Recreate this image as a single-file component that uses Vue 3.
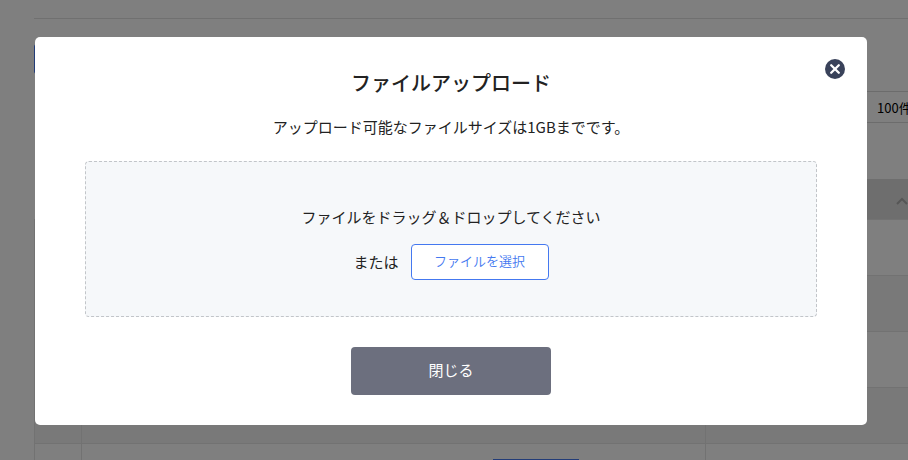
<template>
  <div class="page">
    <main class="content" aria-hidden="true">
      <div class="toolbar">
        <button class="primary-button" type="button" tabindex="-1"></button>
      </div>
      <div class="paging">
        <select v-model="perPage" class="per-page" aria-label="件" tabindex="-1">
          <option value="100">100件</option>
        </select>
      </div>
      <table class="list">
        <thead>
          <tr>
            <th class="col-check"></th>
            <th class="col-name"></th>
            <th class="col-date">
              <svg class="sort-icon" viewBox="0 0 12 8" width="12" height="8">
                <path d="M1 7l5-5 5 5" fill="none" stroke="#acacac" stroke-width="2" />
              </svg>
            </th>
          </tr>
        </thead>
        <tbody>
          <tr v-for="row in rows" :key="row.id">
            <td></td>
            <td class="action">
              <button v-if="row.editable" class="row-button" type="button" tabindex="-1"></button>
            </td>
            <td></td>
          </tr>
        </tbody>
      </table>
    </main>

    <div v-if="isOpen" class="overlay">
      <section class="modal" role="dialog" aria-modal="true" aria-labelledby="upload-title">
        <button class="close-icon" type="button" @click="close">
          <svg viewBox="0 0 20 20" width="20" height="20">
            <circle cx="10" cy="10" r="10" fill="#39425a" />
            <path
              d="M6.2 6.2l7.6 7.6M13.8 6.2l-7.6 7.6"
              fill="none"
              stroke="#fff"
              stroke-width="2.3"
              stroke-linecap="round"
            />
          </svg>
        </button>
        <h1 id="upload-title" class="title">ファイルアップロード</h1>
        <p class="description">アップロード可能なファイルサイズは1GBまでです。</p>
        <div class="drop-area" @dragover.prevent @drop.prevent="onDrop">
          <p class="drop-text">ファイルをドラッグ＆ドロップしてください</p>
          <div class="select-row">
            <span>または</span>
            <button class="select-button" type="button" @click="fileInput.click()">
              ファイルを選択
            </button>
            <input ref="fileInput" type="file" hidden @change="onSelect" />
          </div>
        </div>
        <button class="close-button" type="button" @click="close">閉じる</button>
      </section>
    </div>
  </div>
</template>

<script setup>
import { ref } from 'vue'

const isOpen = ref(true)
const perPage = ref('100')
const rows = [
  { id: 1, editable: false },
  { id: 2, editable: false },
  { id: 3, editable: false },
  { id: 4, editable: false },
  { id: 5, editable: true },
]
const fileInput = ref(null)
const files = ref([])

const close = () => {
  isOpen.value = false
}

const onDrop = (event) => {
  files.value = [...event.dataTransfer.files]
}

const onSelect = (event) => {
  files.value = [...event.target.files]
}
</script>

<style>
body {
  margin: 0;
}
</style>

<style scoped>
.page {
  height: 100vh;
  overflow: hidden;
  background: #fff;
  color: #222;
  font-family: 'Noto Sans CJK JP', sans-serif;
  font-size: 15px;
  line-height: 24px;
}

* {
  box-sizing: border-box;
}

button,
select {
  font-family: inherit;
}

button {
  cursor: pointer;
}

/* list behind the dialog */
.content {
  margin: 18px -40px 0 34px;
}

.toolbar {
  display: flex;
  padding-top: 25px;
  border-top: 1px solid #e0e0e0;
}

.primary-button {
  width: 120px;
  height: 30px;
  border: 0;
  border-radius: 3px;
  background: #4478f0;
}

.paging {
  display: flex;
  justify-content: flex-end;
  margin: 17px 0 56px;
}

.per-page {
  width: 90px;
  height: 32px;
  padding: 0 10px 0 18px;
  border: 1px solid #d8d8d8;
  background: #fff;
  color: #000;
  font-size: 13px;
  appearance: none;
}

.list {
  width: 100%;
  table-layout: fixed;
  border-collapse: collapse;
}

.list th {
  height: 40px;
  padding: 0;
  background: #dcdcdc;
}

.list td {
  height: 56px;
  padding: 0;
  border: 1px solid #e4e4e4;
}

.list tbody tr:nth-child(even) {
  background: #f3f3f3;
}

.col-check {
  width: 47px;
}

.col-date {
  width: 242px;
  text-align: right;
}

.sort-icon {
  margin-right: 40px;
}

.row-button {
  display: block;
  width: 86px;
  height: 24px;
  margin: 0 126px 0 auto;
  border: 1px solid #4478f0;
  background: #fff;
}

/* dialog */
.overlay {
  position: fixed;
  inset: 0;
  padding: 37px 41px 35px 35px;
  background: rgba(0, 0, 0, 0.5);
}

.modal {
  position: relative;
  padding: 30px 50px;
  border-radius: 5px;
  background: #fff;
  text-align: center;
}

.close-icon {
  position: absolute;
  top: 22px;
  right: 22px;
  padding: 0;
  border: 0;
  background: none;
}

.close-icon svg {
  display: block;
}

.title {
  margin: 0 0 16px;
  font-size: 20px;
  font-weight: 500;
  line-height: 32px;
}

.description {
  margin: 0 0 22px;
}

.drop-area {
  padding: 43px 20px 36px;
  border: 1px dashed #c2c5c9;
  border-radius: 4px;
  background: #f6f8fa;
}

.drop-text {
  margin: 0 0 15px;
}

.select-row {
  display: flex;
  justify-content: center;
  align-items: center;
  gap: 12px;
}

.select-button {
  width: 138px;
  height: 36px;
  padding: 0 0 4px;
  border: 1px solid #4478f0;
  border-radius: 4px;
  background: #fff;
  color: #4478f0;
  font-size: 13px;
  font-weight: 350;
}

.close-button {
  display: block;
  width: 200px;
  height: 48px;
  margin: 30px auto 0;
  padding: 0 0 4px;
  border: 0;
  border-radius: 4px;
  background: #6c6f7e;
  color: #fff;
  font-size: 15px;
}
</style>
